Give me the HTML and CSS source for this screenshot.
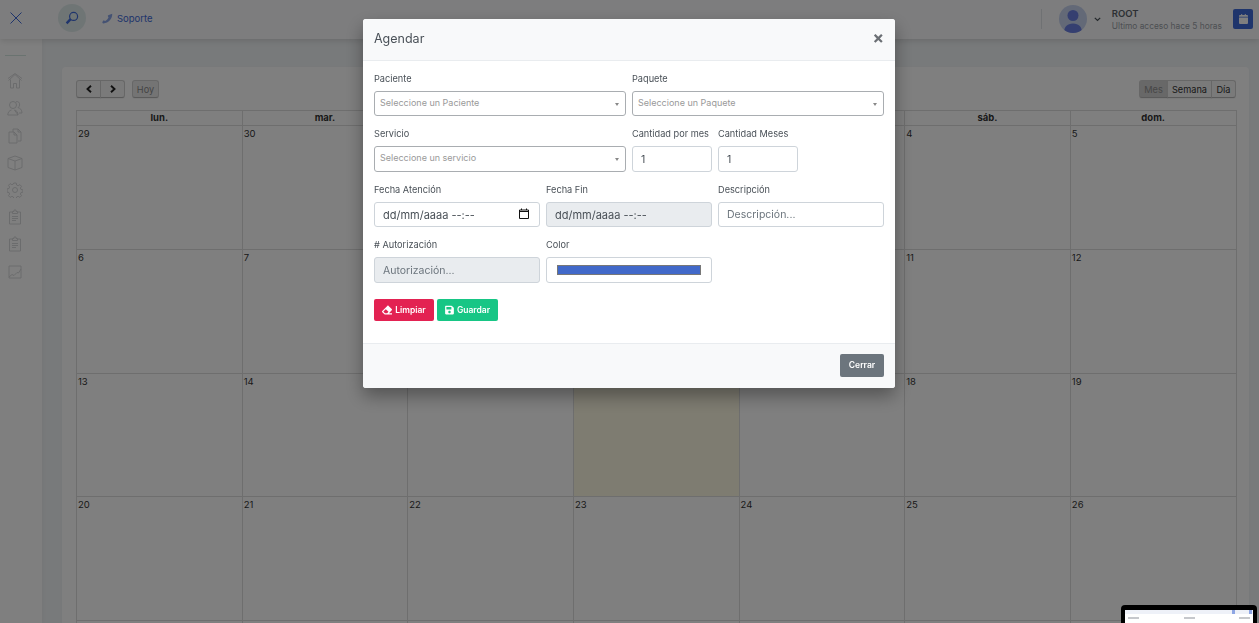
FILE: index.html
```html
<!DOCTYPE html>
<html lang="es">
<head>
    <meta charset="UTF-8">
    <meta name="viewport" content="width=device-width, initial-scale=1.0">
    <title>Agendar</title>
    <link rel="stylesheet" href="styles.css">
</head>
<body>
    <header class="topbar">
        <svg class="close-menu" width="12" height="12" viewBox="0 0 12 12"><path d="M.5.500l11 11M11.500.500l-11 11"/></svg>
        <div class="search-circle">
            <svg width="14" height="14" viewBox="0 0 14 14"><circle cx="8.600" cy="5.400" r="4" class="lens"/><path d="M5.600 8.200L1.600 12.400" class="handle"/></svg>
        </div>
        <a class="support">
            <svg width="11" height="11" viewBox="0 0 11 11"><path d="M10.200.800c.4 4.800-3.600 9.400-8.800 9.600-.8 0-1.200-.5-1-1.100l.5-1.300c.2-.4.600-.5 1-.4l1.400.5c1.500-.8 2.500-2 3.200-3.500l-.6-1.300c-.2-.4-.1-.8.300-1.100z"/></svg>
            Soporte
        </a>
        <div class="topbar-right">
            <span class="divider"></span>
            <div class="avatar">
                <svg width="28" height="28" viewBox="0 0 28 28"><circle cx="14" cy="10.500" r="5.500"/><path d="M5 28c0-6 3-9.500 9-9.500s9 3.500 9 9.500z"/></svg>
            </div>
            <svg class="chevron" width="7" height="5" viewBox="0 0 7 5"><path d="M.8.800l2.700 2.700L6.200.8"/></svg>
            <div class="user-info">
                <strong>ROOT</strong>
                <span>Ultimo acceso hace 5 horas</span>
            </div>
            <div class="calendar-btn">
                <svg width="9" height="10" viewBox="0 0 9 10"><path d="M0 3.500h9V9a1 1 0 0 1-1 1H1a1 1 0 0 1-1-1zM1 1h1.200V0h1v1h2.600V0h1v1H8a1 1 0 0 1 1 1v.8H0V2a1 1 0 0 1 1-1z"/></svg>
            </div>
        </div>
    </header>

    <div class="layout">
        <nav class="sidebar">
            <span class="sidebar-line"></span>
            <svg width="16" height="16" viewBox="0 0 16 16"><path d="M1.500 7.500L8 1.500l6.500 6M1 5.500L8 .5l7 5M3.500 6.500V15h3v-4.500h3V15h3V6.500"/></svg>
            <svg width="16" height="16" viewBox="0 0 16 16"><circle cx="6" cy="5" r="3.500"/><path d="M.8 15c0-3 1.700-4.500 3.700-5M7.500 10c2 .5 3.500 2 3.500 5zM.8 15H11M9 1.800c2-.8 4 .6 3.600 3.200-.1 1-.7 2-1.600 2.600 2 .5 4 2 4 5.400h-3"/></svg>
            <svg width="16" height="16" viewBox="0 0 16 16"><path d="M6 4V1h5l3 3v9h-3M2 4h5l3 3v8H2zM7 4v3h3M11 1v3h3"/></svg>
            <svg width="16" height="16" viewBox="0 0 16 16"><path d="M8 1l7 2.500v9L8 15l-7-2.500v-9zM1 3.500L8 6l7-2.500M8 6v9"/></svg>
            <svg width="16" height="16" viewBox="0 0 16 16"><circle cx="8" cy="8" r="2.500"/><path d="M6.800 1h2.400l.4 2 1.500.7 1.800-1.100 1.600 1.700-1.100 1.700.6 1.500 2 .4v2.200l-2 .4-.6 1.500 1.100 1.700-1.600 1.700-1.800-1.100-1.500.7-.4 2H6.800l-.4-2-1.500-.7-1.800 1.100-1.600-1.700 1.100-1.700-.6-1.500-2-.4V6.900l2-.4.6-1.500L1.500 3.300l1.600-1.700 1.800 1.100 1.500-.7z"/></svg>
            <svg width="16" height="16" viewBox="0 0 16 16"><path d="M5.500 3H2.500v12h11V3h-3M5.500 4.500V2.500h1.500V1h2v1.500h1.500v2zM5 7.500h6M5 9.500h6M5 11.500h4"/></svg>
            <svg width="16" height="16" viewBox="0 0 16 16"><path d="M5.500 3H2.500v12h11V3h-3M5.500 4.500V2.500h1.500V1h2v1.500h1.500v2zM5 7.500h6M5 9.500h6M5 11.500h4"/></svg>
            <svg width="16" height="16" viewBox="0 0 16 16"><path d="M2 2h12v12H2zM2 13l3-2.500 2 1 3-3 1.500.5L14 5"/></svg>
        </nav>

        <main class="content">
            <section class="card">
                <div class="cal-toolbar">
                    <div class="btn-group">
                        <button class="cal-btn arrow">
                            <svg width="6" height="8" viewBox="0 0 6 8"><path d="M5 .8L1.500 4 5 7.200"/></svg>
                        </button>
                        <button class="cal-btn arrow">
                            <svg width="6" height="8" viewBox="0 0 6 8"><path d="M1 .8L4.500 4 1 7.200"/></svg>
                        </button>
                    </div>
                    <button class="cal-btn today-btn">Hoy</button>
                    <div class="btn-group view-switch">
                        <button class="cal-btn active">Mes</button>
                        <button class="cal-btn week-btn">Semana</button>
                        <button class="cal-btn day-btn">Día</button>
                    </div>
                </div>
                <table class="calendar">
                    <thead>
                        <tr><th>lun.</th><th>mar.</th><th>mié.</th><th>jue.</th><th>vie.</th><th>sáb.</th><th>dom.</th></tr>
                    </thead>
                    <tbody>
                        <tr><td>29</td><td>30</td><td>1</td><td>2</td><td>3</td><td>4</td><td>5</td></tr>
                        <tr><td>6</td><td>7</td><td>8</td><td>9</td><td>10</td><td>11</td><td>12</td></tr>
                        <tr><td>13</td><td>14</td><td>15</td><td class="today">16</td><td>17</td><td>18</td><td>19</td></tr>
                        <tr><td>20</td><td>21</td><td>22</td><td>23</td><td>24</td><td>25</td><td>26</td></tr>
                        <tr><td></td><td></td><td></td><td></td><td></td><td></td><td></td></tr>
                    </tbody>
                </table>
            </section>
        </main>
    </div>

    <div class="backdrop"></div>

    <div class="modal">
        <div class="modal-header">
            <h5>Agendar</h5>
            <span class="modal-close">×</span>
        </div>
        <div class="modal-body">
            <form class="form-grid">
                <div class="field span-3">
                    <label>Paciente</label>
                    <div class="select-box">Seleccione un Paciente<i class="caret"></i></div>
                </div>
                <div class="field span-3">
                    <label>Paquete</label>
                    <div class="select-box">Seleccione un Paquete<i class="caret"></i></div>
                </div>
                <div class="field span-3">
                    <label>Servicio</label>
                    <div class="select-box tall">Seleccione un servicio<i class="caret"></i></div>
                </div>
                <div class="field span-1">
                    <label>Cantidad por mes</label>
                    <input class="form-control tall" type="text" value="1">
                </div>
                <div class="field span-1">
                    <label>Cantidad Meses</label>
                    <input class="form-control tall" type="text" value="1">
                </div>
                <div class="field span-2 row-end">
                    <label>Fecha Atención</label>
                    <div class="date-wrap">
                        <input class="form-control date-text" type="text" value="dd/mm/aaaa --:--">
                        <svg class="date-icon" width="10" height="11" viewBox="0 0 10 11"><path d="M.5 2h9v8.500h-9zM.5 3.500h9M2.500.5V2M7.500.5V2"/></svg>
                    </div>
                </div>
                <div class="field span-2">
                    <label>Fecha Fin</label>
                    <input class="form-control date-text" type="text" value="dd/mm/aaaa --:--" disabled>
                </div>
                <div class="field span-2">
                    <label>Descripción</label>
                    <input class="form-control" type="text" placeholder="Descripción...">
                </div>
                <div class="field span-2">
                    <label># Autorización</label>
                    <input class="form-control tall" type="text" placeholder="Autorización..." disabled>
                </div>
                <div class="field span-2">
                    <label>Color</label>
                    <input class="form-control tall color-input" type="color" value="#4169c9">
                </div>
            </form>
            <div class="form-actions">
                <button class="btn btn-danger">
                    <svg width="10" height="10" viewBox="0 0 512 512"><path d="M497.941 273.941c18.745-18.745 18.745-49.137 0-67.882l-160-160c-18.745-18.745-49.136-18.746-67.883 0l-256 256c-18.745 18.745-18.745 49.137 0 67.882l96 96A48.004 48.004 0 0 0 144 480h356c6.627 0 12-5.373 12-12v-40c0-6.627-5.373-12-12-12H355.883l142.058-142.059zm-302.627-62.627l137.373 137.373L265.373 416H150.628l-80-80 124.686-124.686z"/></svg>
                    Limpiar
                </button>
                <button class="btn btn-success">
                    <svg width="9" height="10" viewBox="0 0 448 512"><path d="M433.941 129.941l-83.882-83.882A48 48 0 0 0 316.118 32H48C21.49 32 0 53.49 0 80v352c0 26.51 21.49 48 48 48h352c26.51 0 48-21.49 48-48V163.882a48 48 0 0 0-14.059-33.941zM224 416c-35.346 0-64-28.654-64-64 0-35.346 28.654-64 64-64s64 28.654 64 64c0 35.346-28.654 64-64 64zm96-304.520V212c0 6.627-5.373 12-12 12H76c-6.627 0-12-5.373-12-12V108c0-6.627 5.373-12 12-12h228.520c3.183 0 6.235 1.264 8.485 3.515l3.48 3.48A11.996 11.996 0 0 1 320 111.48z"/></svg>
                    Guardar
                </button>
            </div>
        </div>
        <div class="modal-footer">
            <button class="btn btn-secondary">Cerrar</button>
        </div>
    </div>

    <div class="thumb">
        <div class="thumb-screen">
            <div class="thumb-bar"><i></i><i></i></div>
            <div class="thumb-row"><i></i><i></i><i></i></div>
        </div>
    </div>
</body>
</html>
```

FILE: styles.css
```css
* {
    box-sizing: border-box;
}
html, body {
    height: 100%;
}
body {
    margin: 0;
    overflow: hidden;
    font-family: Inter, "Liberation Sans", sans-serif;
    font-size: 9.5px;
    color: #495057;
    background-color: #f1f4f6;
}

/* top bar */
.topbar {
    display: flex;
    align-items: center;
    height: 39px;
    background-color: #fafbfc;
    box-shadow: 0 2px 6px rgba(0, 0, 0, 0.12);
    position: relative;
    z-index: 2;
}
.close-menu {
    margin-left: 10px;
    margin-top: -3px;
    fill: none;
    stroke: #3f6ad8;
    stroke-width: 1;
}
.search-circle {
    display: flex;
    align-items: center;
    justify-content: center;
    width: 28px;
    height: 28px;
    margin-left: 36px;
    margin-top: -3px;
    border-radius: 50%;
    background-color: #dfeaeb;
}
.lens {
    fill: none;
    stroke: #3f6ad8;
    stroke-width: 1.2;
}
.handle {
    fill: none;
    stroke: #3f6ad8;
    stroke-width: 2.4;
}
.support {
    display: flex;
    align-items: center;
    gap: 4px;
    margin-left: 16px;
    color: #3f6ad8;
    font-size: 9.5px;
    margin-top: -2px;
}
.support svg {
    fill: #8aa4e6;
}
.topbar-right {
    display: flex;
    align-items: center;
    margin-left: auto;
    margin-right: 6px;
}
.divider {
    width: 1px;
    height: 20px;
    background-color: #dee2e6;
    margin-right: 17px;
    margin-top: -2px;
}
.avatar {
    width: 28px;
    height: 28px;
    border-radius: 50%;
    background-color: #c6d2ef;
    overflow: hidden;
    margin-top: -1px;
}
.avatar svg {
    fill: #6a7fe0;
    display: block;
}
.chevron {
    margin-left: 7px;
    fill: none;
    stroke: #495057;
    stroke-width: 1.2;
}
.user-info {
    display: flex;
    flex-direction: column;
    gap: 2px;
    margin-left: 11px;
    margin-right: 11px;
    margin-top: -1px;
}
.user-info strong {
    font-size: 9.5px;
    font-weight: 600;
    color: #5a6168;
}
.user-info span {
    font-size: 8.4px;
    color: #9aa0a7;
}
.calendar-btn {
    display: flex;
    align-items: center;
    justify-content: center;
    width: 20px;
    height: 20px;
    border-radius: 2px;
    background-color: #3f6ad8;
    margin-top: -1px;
}
.calendar-btn svg {
    fill: #ffffff;
}

/* layout */
.layout {
    display: flex;
    height: calc(100% - 39px);
    overflow: hidden;
}
.sidebar {
    display: flex;
    flex-direction: column;
    align-items: center;
    gap: 11.200px;
    width: 42px;
    flex-shrink: 0;
    padding-top: 16px;
    padding-right: 12px;
    background-color: #ffffff;
    box-shadow: 1px 0 4px rgba(0, 0, 0, 0.04);
}
.sidebar svg {
    flex-shrink: 0;
    fill: none;
    stroke: #d2d4d6;
    stroke-width: 0.9;
}
.sidebar-line {
    width: 21px;
    height: 1px;
    background-color: #d5e6e0;
    margin-bottom: 6px;
}
.content {
    flex: 1;
    padding: 28px 10px 0 20px;
    min-width: 0;
}
.card {
    background-color: #ffffff;
    border-radius: 4px 4px 0 0;
    padding: 13px 13px 0 14px;
    height: 100%;
    overflow: hidden;
    box-shadow: 0 1px 3px rgba(0, 0, 0, 0.03);
}

/* calendar */
.cal-toolbar {
    display: flex;
    align-items: center;
    height: 18px;
    margin-bottom: 12px;
}
.btn-group {
    display: flex;
}
.view-switch {
    margin-left: auto;
}
.cal-btn {
    height: 18px;
    padding: 0;
    border: 1px solid #cfcfcf;
    border-bottom-color: #b4b4b4;
    background-color: #f5f5f5;
    color: #333333;
    font-family: inherit;
    font-size: 9.200px;
    box-shadow: 0 1px 1px rgba(0, 0, 0, 0.05);
}
.btn-group .cal-btn + .cal-btn {
    margin-left: -1px;
}
.btn-group .cal-btn:first-child {
    border-radius: 3px 0 0 3px;
}
.btn-group .cal-btn:last-child {
    border-radius: 0 3px 3px 0;
}
.arrow {
    display: flex;
    align-items: center;
    justify-content: center;
    width: 25px;
}
.arrow svg {
    fill: none;
    stroke: #222222;
    stroke-width: 1.9;
}
.today-btn {
    margin-left: 7px;
    width: 27px;
    border-radius: 3px;
    color: #8a8a8a;
    background-color: #e9e9e9;
}
.cal-btn.active {
    background-color: #d0d0d0;
    color: #8f8f8f;
    width: 29px;
}
.week-btn {
    width: 45px;
}
.day-btn {
    width: 25px;
}
.calendar {
    width: 1160.500px;
    table-layout: fixed;
    border-collapse: collapse;
}
.calendar th, .calendar td {
    border: 1px solid #dddddd;
    color: #333333;
}
.calendar th {
    height: 15px;
    padding: 0 0 2px;
    font-size: 9.500px;
    font-weight: 700;
    text-align: center;
}
.calendar td {
    height: 123.750px;
    padding: 1px 1px 0;
    vertical-align: top;
    font-size: 9.500px;
    line-height: 13px;
}
.calendar td.today {
    background-color: #fcf8e3;
}

/* modal */
.backdrop {
    position: fixed;
    inset: 0;
    z-index: 10;
    background-color: rgba(0, 0, 0, 0.5);
}
.modal {
    position: fixed;
    top: 19px;
    left: 363px;
    z-index: 11;
    width: 532px;
    background-color: #ffffff;
    border-radius: 3px;
    box-shadow: 0 8px 18px rgba(0, 0, 0, 0.35);
}
.modal-header {
    display: flex;
    align-items: center;
    justify-content: space-between;
    height: 42px;
    padding: 0 11px 3px;
    background-color: #f8f9fa;
    border-bottom: 1px solid #e9ecef;
    border-radius: 3px 3px 0 0;
}
.modal-header h5 {
    margin: 0;
    font-size: 12.500px;
    font-weight: 400;
    color: #495057;
}
.modal-close {
    font-size: 17px;
    font-weight: 700;
    color: #6b6f74;
    line-height: 1;
}
.modal-body {
    padding: 12px 11px 0;
    height: 282px;
}
.form-grid {
    display: grid;
    grid-template-columns: repeat(6, 80px);
    column-gap: 6px;
    row-gap: 12px;
}
.field {
    display: flex;
    flex-direction: column;
    min-width: 0;
}
.span-1 {
    grid-column: span 1;
}
.span-2 {
    grid-column: span 2;
}
.span-3 {
    grid-column: span 3;
}
.row-end {
    grid-column: 1 / span 2;
}
.field label {
    height: 13px;
    margin-bottom: 5px;
    line-height: 12px;
    font-size: 9.200px;
    color: #495057;
    white-space: nowrap;
}
.select-box {
    position: relative;
    display: flex;
    align-items: center;
    height: 25px;
    padding-left: 5px;
    padding-bottom: 2px;
    border: 1px solid #a9adb1;
    border-radius: 3px;
    color: #999999;
    font-size: 9px;
    background-color: #ffffff;
}
.select-box.tall {
    height: 26px;
    padding-bottom: 3px;
}
.caret {
    position: absolute;
    right: 6px;
    top: 50%;
    margin-top: -1px;
    border-top: 3px solid #888888;
    border-left: 2px solid transparent;
    border-right: 2px solid transparent;
}
.form-control {
    display: block;
    width: 100%;
    height: 25px;
    padding: 0 8px;
    border: 1px solid #ced4da;
    border-radius: 3px;
    background-color: #ffffff;
    color: #495057;
    font-family: inherit;
    font-size: 10.500px;
}
.date-text {
    font-size: 11px;
}
.form-control.tall {
    height: 26px;
}
.form-control::placeholder {
    color: #6c757d;
    opacity: 1;
}
.form-control:disabled {
    background-color: #e9ecef;
    opacity: 1;
    color: #495057;
}
.date-wrap {
    position: relative;
}
.date-icon {
    position: absolute;
    top: 6px;
    right: 11px;
    fill: none;
    stroke: #111111;
    stroke-width: 1;
}
.color-input {
    padding: 7px 10px;
}
.color-input::-webkit-color-swatch-wrapper {
    padding: 0;
}
.color-input::-webkit-color-swatch {
    border: 1px solid #777777;
    border-radius: 0;
}
.form-actions {
    display: flex;
    gap: 3px;
    margin-top: 16px;
}
.btn {
    display: inline-flex;
    align-items: center;
    justify-content: center;
    gap: 3px;
    height: 22px;
    border: none;
    border-radius: 2px;
    color: #ffffff;
    font-family: inherit;
    font-size: 8.500px;
    font-weight: 600;
}
.btn svg {
    fill: #ffffff;
}
.btn-danger {
    width: 60px;
    background-color: #e32252;
}
.btn-success {
    width: 61px;
    background-color: #17c685;
}
.btn-secondary {
    width: 44px;
    height: 23px;
    background-color: #6c757d;
}
.modal-footer {
    display: flex;
    justify-content: flex-end;
    align-items: center;
    height: 45px;
    padding: 0 11px 2px;
    background-color: #f8f9fa;
    border-top: 1px solid #e9ecef;
    border-radius: 0 0 3px 3px;
}

/* little preview in the corner */
.thumb {
    position: fixed;
    left: 1121px;
    bottom: 0;
    z-index: 12;
    width: 136px;
    height: 18px;
    padding: 5px 4px 0;
    border-radius: 4px 4px 0 0;
    background-color: #000000;
}
.thumb-screen {
    height: 100%;
    background-color: #ffffff;
}
.thumb-bar {
    display: flex;
    justify-content: flex-end;
    gap: 14px;
    height: 4px;
    padding-right: 1px;
    background-color: #eef1f8;
}
.thumb-bar i {
    width: 3px;
    height: 4px;
    background-color: #8ea6e4;
}
.thumb-row {
    display: flex;
    justify-content: space-between;
    margin: 3px 3px 0;
}
.thumb-row i {
    width: 11px;
    height: 2px;
    background-color: #c6c8cc;
}
```
